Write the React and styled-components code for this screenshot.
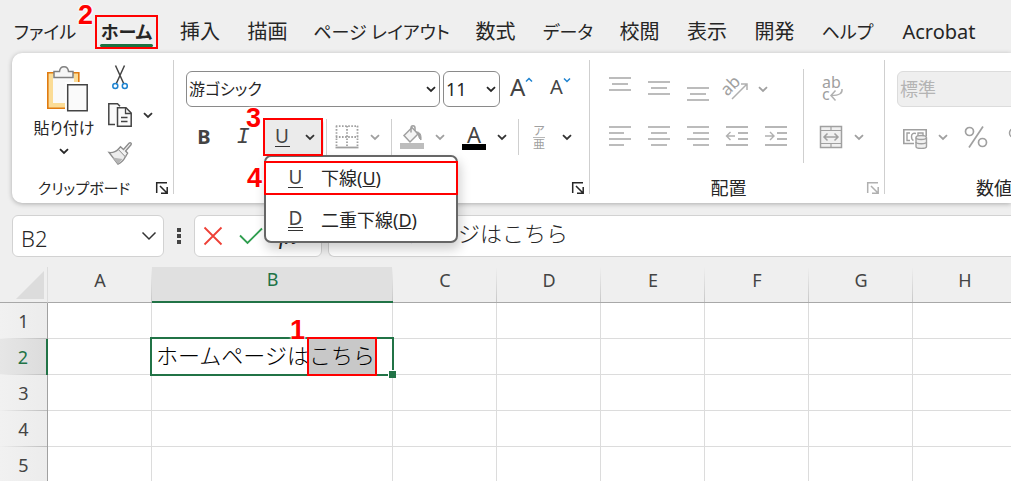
import React from 'react';
import styled, { createGlobalStyle, css } from 'styled-components';

const GlobalStyle = createGlobalStyle`
  * {
    box-sizing: border-box;
  }
  body {
    margin: 0;
    background: #efefef;
    color: #262626;
    font-family: 'Noto Sans', 'Noto Sans CJK JP', sans-serif;
    font-size: 18px;
    font-feature-settings: 'palt';
  }
  button,
  input,
  select {
    margin: 0;
    padding: 0;
    border: 0;
    background: none;
    color: inherit;
    font: inherit;
    font-feature-settings: inherit;
  }
  svg {
    display: block;
    flex: none;
    fill: none;
    overflow: visible;
  }
`;

const Page = styled.div`
  overflow-x: clip;
`;

/* numbered step markers */

const Callout = styled.span`
  position: absolute;
  inset: ${({ $inset }) => $inset || '-2px'};
  border: 2px solid #f00;
  pointer-events: none;
  z-index: 3;
`;

const stepPlace = {
  top: '-13px',
  middle: '4px',
  above: '-20px',
};

const StepNumber = styled.b`
  position: absolute;
  right: 100%;
  top: ${({ $place }) => stepPlace[$place]};
  padding-right: 4px;
  color: #f00;
  font: bold 27px/22px 'Liberation Sans', sans-serif;
  text-shadow: 0 0 2px #fff, 0 0 2px #fff, 0 0 3px #fff, 0 0 3px #fff;
`;

const Step = ({ number, place = 'top', inset }) => (
  <Callout $inset={inset}>
    <StepNumber $place={place}>{number}</StepNumber>
  </Callout>
);

/* tabs */

const TabBar = styled.nav`
  display: flex;
  align-items: flex-end;
  gap: 28px;
  height: 53px;
  padding: 0 16px 4px 18px;
`;

const Tab = styled.button`
  position: relative;
  display: flex;
  flex: none;
  justify-content: center;
  width: ${({ $width }) => $width}px;
  height: 34px;
  font-size: ${({ $kana }) => ($kana ? 18 : 20)}px;
  line-height: 34px;
  white-space: nowrap;
  ${({ $active }) =>
    $active &&
    css`
      font-weight: bold;
      &::after {
        content: '';
        position: absolute;
        inset: auto 0 2px;
        height: 3px;
        border-radius: 2px;
        background: #1b7242;
      }
    `}
`;

const tabs = [
  { label: 'ファイル', width: 54, kana: true },
  { label: 'ホーム', width: 53, kana: true, active: true },
  { label: '挿入', width: 38 },
  { label: '描画', width: 41 },
  { label: 'ページ レイアウト', width: 131, kana: true },
  { label: '数式', width: 41 },
  { label: 'データ', width: 48, kana: true },
  { label: '校閲', width: 39 },
  { label: '表示', width: 40 },
  { label: '開発', width: 39 },
  { label: 'ヘルプ', width: 51, kana: true },
  { label: 'Acrobat', width: 76 },
];

/* ribbon */

const Ribbon = styled.section`
  display: flex;
  height: 150px;
  margin-left: 12px;
  border-radius: 10px 0 0 10px;
  background: #fff;
  box-shadow: 0 1px 5px rgba(0, 0, 0, 0.28);
`;

const Group = styled.div`
  display: flex;
  flex: none;
  flex-direction: column;
  width: ${({ $width }) => $width}px;
`;

const GroupBody = styled.div`
  display: flex;
  height: 120px;
  padding-left: ${({ $left }) => $left}px;
`;

const GroupFooter = styled.div`
  display: flex;
  align-items: center;
  height: 30px;
  padding-right: 5px;
  font-size: ${({ $kana }) => ($kana ? 15 : 18)}px;
  line-height: 24px;
  span {
    flex: 1;
    text-align: center;
  }
`;

const Divider = styled.i`
  flex: none;
  width: 1px;
  height: ${({ $height }) => $height}px;
  margin-top: ${({ $top }) => $top || 0}px;
  background: #cfcfcf;
`;

const Stack = styled.div`
  display: flex;
  flex-direction: column;
  gap: 12px;
  padding: 18px ${({ $right }) => $right || 0}px 0 ${({ $left }) => $left || 0}px;
`;

const Row = styled.div`
  display: flex;
  align-items: center;
  gap: ${({ $gap }) => $gap || 0}px;
  height: 36px;
`;

const ToolButton = styled.button`
  display: flex;
  align-items: center;
  justify-content: center;
  width: ${({ $width }) => $width || 38}px;
  height: 36px;
  color: ${({ disabled }) => (disabled ? '#a0a0a0' : '#444')};
`;

const BoldButton = styled(ToolButton)`
  padding-bottom: 2px;
  font-size: 20px;
  font-weight: bold;
`;

const ItalicButton = styled(ToolButton)`
  font: italic 22px 'Liberation Mono', monospace;
`;

const SplitButton = styled.button`
  display: flex;
  align-items: center;
  gap: 10px;
  width: 60px;
  height: 36px;
  padding-left: 6px;
  border-radius: 5px;
  color: ${({ disabled }) => (disabled ? '#a0a0a0' : '#333')};
  ${({ $pressed }) => $pressed && 'background: #ebebeb;'}
`;

const PasteButton = styled.button`
  display: flex;
  flex-direction: column;
  align-items: center;
  width: 76px;
  padding-top: 12px;
  font-size: 16px;
  line-height: 22px;
  svg + span {
    margin: 4px 0 6px;
  }
`;

const ClipboardTools = styled.div`
  display: flex;
  flex-direction: column;
  gap: 2px;
  padding-top: 6px;
`;

const LetterIcon = styled.span`
  display: flex;
  flex: none;
  flex-direction: column;
  align-items: center;
  width: 24px;
  color: #444;
  font-size: 22px;
  line-height: 19px;
`;

const UnderlinedLetter = styled.span`
  width: 15px;
  padding-bottom: ${({ $double }) => ($double ? 0 : 1)}px;
  border-bottom: ${({ $double }) => ($double ? '4px double' : '1px solid')} #333;
  color: #444;
  font-size: 19px;
  line-height: 18px;
  text-align: center;
`;

const ColorBar = styled.i`
  width: 24px;
  height: 6px;
  background: #000;
`;

const Ruby = styled(LetterIcon)`
  color: #a0a0a0;
  font-size: 12px;
  line-height: 13px;
  span + span {
    border-top: 1px solid #b8b8b8;
  }
`;

const GrowTools = styled(Row)`
  padding-left: 7px;
`;

const GrowLetter = styled.button`
  display: flex;
  align-items: flex-start;
  width: 40px;
  height: 32px;
  color: #444;
  font-size: ${({ $size }) => $size}px;
  line-height: 28px;
  svg {
    margin-top: 3px;
  }
`;

const Picker = styled.label`
  display: grid;
  align-items: center;
  width: ${({ $width }) => $width}px;
  height: 36px;
  border: 1px solid ${({ $disabled }) => ($disabled ? '#dcdcdc' : '#8a8a8a')};
  border-radius: 6px;
  background: ${({ $disabled }) => ($disabled ? '#efefef' : '#fff')};
  color: ${({ $disabled }) => ($disabled ? '#b4b4b4' : '#262626')};
  select,
  svg {
    grid-area: 1 / 1;
  }
  select {
    appearance: none;
    width: 100%;
    height: 34px;
    padding-left: 2px;
    color: inherit;
    font-size: ${({ $kana }) => ($kana ? 16 : 18)}px;
    opacity: 1;
  }
  svg {
    justify-self: end;
    margin-right: 2px;
    pointer-events: none;
  }
`;

/* underline menu */

const Anchor = styled.div`
  position: relative;
`;

const Menu = styled.ul`
  position: absolute;
  top: 36px;
  left: 0;
  z-index: 2;
  width: 194px;
  margin: 0;
  padding: 4px 0 0;
  border: 2px solid #666;
  border-radius: 7px;
  background: #fff;
  box-shadow: 2px 6px 12px rgba(0, 0, 0, 0.2);
  list-style: none;
`;

const MenuItem = styled.li`
  position: relative;
  button {
    display: flex;
    align-items: center;
    gap: 18px;
    width: 100%;
    height: ${({ $height }) => $height}px;
    padding: ${({ $top }) => $top || 0}px 0 0 22px;
    font-size: 18px;
    line-height: 24px;
    text-align: left;
  }
`;

/* formula bar */

const FormulaRow = styled.div`
  display: flex;
  height: 42px;
  margin: 12px 0 10px 12px;
`;

const Box = styled.div`
  display: flex;
  flex: none;
  align-items: center;
  border: 1px solid #d2d2d2;
  border-radius: 6px;
  background: #fff;
`;

const NameBox = styled(Box)`
  width: 152px;
  padding: 0 6px 0 8px;
  input {
    flex: 1;
    min-width: 0;
    padding-top: 4px;
    font-size: 22px;
    font-weight: 300;
  }
`;

const MoreButton = styled.button`
  display: flex;
  align-items: center;
  justify-content: center;
  width: 30px;
`;

const EntryBox = styled(Box)`
  justify-content: space-between;
  width: 128px;
  margin-right: 6px;
  padding: 0 25px 0 8px;
`;

const FunctionButton = styled.button`
  font: italic 24px 'Liberation Serif', serif;
`;

const FormulaBox = styled(Box)`
  flex: 1;
  border-right: 0;
  border-radius: 6px 0 0 6px;
  input {
    width: 100%;
    padding: 0 0 8px 20px;
    font-size: 22px;
    font-weight: 300;
    font-feature-settings: normal;
  }
`;

/* sheet */

const Sheet = styled.table`
  width: 100%;
  border-spacing: 0;
  table-layout: fixed;
  background: #fff;
  th,
  td {
    height: 36px;
    padding: 0;
  }
  td {
    border-right: 1px solid #dcdcdc;
    border-bottom: 1px solid #dcdcdc;
  }
`;

const Corner = styled.th`
  border-right: 1px solid #ddd;
  border-bottom: 1px solid #a8a8a8;
  background: #efefef;
  svg {
    margin-left: 16px;
  }
`;

const ColumnHead = styled.th`
  border-bottom: ${({ $active }) => ($active ? '2px solid #217346' : '1px solid #a8a8a8')};
  background: linear-gradient(#efefef, #c8c8c8) right / 1px 100% no-repeat,
    ${({ $active }) => ($active ? '#e0e0e0' : '#efefef')};
  color: ${({ $active }) => ($active ? '#217346' : '#444')};
  font-weight: normal;
  line-height: 24px;
  && {
    padding-bottom: 10px;
  }
`;

const RowHead = styled.th`
  border-right: ${({ $active }) => ($active ? '2px solid #217346' : '1px solid #a0a0a0')};
  background: linear-gradient(to right, #efefef, #bdbdbd) bottom / 100% 1px no-repeat,
    ${({ $active }) =>
      $active ? 'linear-gradient(to right, #e6e6e6, #dcdcdc)' : 'linear-gradient(to right, #f1f1f1, #ececec)'};
  color: ${({ $active }) => ($active ? '#217346' : '#444')};
  font-weight: normal;
  line-height: 24px;
`;

const EditCell = styled.td`
  position: relative;
  font-size: 22px;
  font-weight: 300;
  font-feature-settings: normal;
  color: #000;
  white-space: nowrap;
  &::before {
    content: '';
    position: absolute;
    inset: -2px;
    border: 2px solid #217346;
  }
  &::after {
    content: '';
    position: absolute;
    right: -4px;
    bottom: -4px;
    width: 7px;
    height: 7px;
    border: solid #fff;
    border-width: 1px 0 0 1px;
    background: #217346;
  }
  > span {
    display: flex;
    height: 35px;
    padding-left: 4px;
    line-height: 32px;
  }
`;

const Selected = styled.mark`
  position: relative;
  background: #c8c8c8;
  color: inherit;
`;

/* icons */

const Svg = ({ size = 24, width, height, children, ...props }) => (
  <svg
    width={width || size}
    height={height || size}
    viewBox={`0 0 ${width || size} ${height || size}`}
    stroke="currentColor"
    strokeWidth="1.5"
    aria-hidden="true"
    {...props}
  >
    {children}
  </svg>
);

const Chevron = () => (
  <Svg size={12} strokeWidth="1.8">
    <path d="M2 4.2 6 8l4-3.800" />
  </Svg>
);

const Lines = ({ rows }) => (
  <Svg strokeWidth="1.4">
    {rows.map(([x1, x2, y]) => (
      <path key={y} d={`M${x1} ${y}H${x2}`} />
    ))}
  </Svg>
);

const PasteIcon = () => (
  <Svg width={48} height={48}>
    <g transform="translate(6 0)">
      <path d="M1.8 7.8h31v35.400h-31z" fill="#fbdc96" stroke="#e07b10" strokeWidth="1.600" />
      <path d="M7 11h21v27H7z" fill="#fafafa" stroke="none" />
      <path d="M19 17h15v30H19z" fill="#fff" stroke="none" />
      <path d="M8 12.500V6.500h5.500c.5-6.500 8.500-6.500 9 0H27v6z" fill="#f6f6f6" stroke="#808080" />
      <path d="M21.700 19.800h19.500v26h-19.500z" fill="#fafafa" stroke="#444" />
    </g>
  </Svg>
);

const CutIcon = () => (
  <Svg>
    <path d="m7.500.5 8.400 18.500M16.500.5 8.100 19" stroke="#444" />
    <circle cx="7.300" cy="21" r="2.500" stroke="#1e83d0" />
    <circle cx="16.800" cy="21" r="2.500" stroke="#1e83d0" />
  </Svg>
);

const CopyIcon = () => (
  <Svg stroke="#444">
    <path d="M7 21.500H.8V.8h8.700l2.500 2.500" fill="#fafafa" />
    <path d="M9.500 4.800H18l5.200 5.200v13.200H9.500z" fill="#fafafa" />
    <path d="M17.500 5v5.500h5.500M13 14.500h6.500M13 18.500h6.500" strokeWidth="1.300" />
  </Svg>
);

const BrushIcon = () => (
  <Svg stroke="#8c8c8c" strokeWidth="1.400">
    <path d="M1 11.500c4 .5 7-.8 9.500-3.500l7 7.500c-1.500 3.500-4 6-7.500 7.700z" fill="#ececec" />
    <path d="M4.500 16.500 14.500 18l-4.500 5z" fill="#b5b5b5" stroke="none" />
    <path d="m10.500 8 2-2.200 3 2.700 5.500-6.300c1.400-1.300 3 .2 2 1.600l-5.400 6.200 2 2.200-2 3.300" fill="#f4f4f4" />
  </Svg>
);

const BordersIcon = () => (
  <Svg strokeWidth="1.800">
    <path d="M.8 1.200h22.400M.8 12h22.400M1.500 1v20M12 1v20M22.500 1v20" strokeDasharray="1.600 1.500" />
    <path d="M.5 22.500h23" strokeWidth="1.800" />
  </Svg>
);

const FillIcon = () => (
  <Svg>
    <path d="m4 10.500 8-8 6 6.500-8 8z" fill="#f4f4f4" />
    <path d="M11 7.500V3c0-3 4-3 4 0v3" />
    <path d="M16 7c4-.5 5.500 3 5 8-1.500-1-2.500-3-2.500-5z" fill="#a0a0a0" strokeWidth="1" />
    <path d="M0 18h24v6H0z" fill="#bdbdbd" stroke="none" />
  </Svg>
);

const OrientationIcon = () => (
  <Svg stroke="#b0b0b0">
    <text x="-1" y="17" transform="rotate(-45 5 12)" fill="#a0a0a0" stroke="none" fontSize="17">
      ab
    </text>
    <path d="M9 22 24 7M18 7h6v6" />
  </Svg>
);

const WrapIcon = () => (
  <Svg>
    <g fill="#a0a0a0" stroke="none" fontSize="16">
      <text x="2" y="11">ab</text>
      <text x="2" y="23">c</text>
    </g>
    <path d="M22 12c.5 4-2 6.500-11 6.500M15.500 13.500l-4.500 5 4.500 5" stroke="#b0b0b0" />
  </Svg>
);

const MergeIcon = () => (
  <Svg>
    <path d="M1.500 1.500h21v21h-21z" fill="#f0f0f0" />
    <path d="M1.500 5.500h21M1.500 18.500h21M12 1.500v4M12 18.500v4" strokeWidth="1.200" />
    <path d="M5 12h14M8.500 8.500 5 12l3.500 3.500M15.500 8.500 19 12l-3.500 3.500" />
  </Svg>
);

const CurrencyIcon = () => (
  <Svg strokeWidth="1.400">
    <path d="M11 18.500H.8V4.800h22.400V11" strokeWidth="1.600" />
    <path d="M7 8H4v7.500h3M13 8.500c-3-1-4.500.5-4.500 3s.8 3.500 2 4M15 11V8h5v2" />
    <path d="M13 12.500v9c0 2.500 10.500 2.500 10.500 0v-9" fill="#f0f0f0" />
    <path d="M13 17c0 2.300 10.500 2.300 10.500 0" />
    <ellipse cx="18.200" cy="12.500" rx="5.200" ry="2" fill="#f0f0f0" />
  </Svg>
);

const PercentIcon = () => (
  <Svg strokeWidth="1.700">
    <circle cx="5.500" cy="6.500" r="4" />
    <circle cx="18.500" cy="17.500" r="4" />
    <path d="M19 1.500 5 22.500" />
  </Svg>
);

const CommaIcon = () => (
  <Svg>
    <circle cx="12" cy="8" r="4.500" />
    <path d="M16.500 8c.5 6-2 10-7 12" />
  </Svg>
);

const LauncherIcon = ({ disabled }) => (
  <Svg size={12} stroke={disabled ? '#b0b0b0' : '#262626'} strokeWidth="1.500">
    <path d="M.7 11V.7H11M4 4l7 7M11.200 5v6.200H5" />
  </Svg>
);

const alignTop = [[1, 23, 1], [4, 20, 7], [1, 23, 13]];
const alignMiddle = [[1, 23, 5], [4, 20, 11], [1, 23, 17]];
const alignBottom = [[1, 23, 11], [4, 20, 17], [1, 23, 23]];
const alignLeft = [[1, 23, 2], [1, 16, 8], [1, 23, 14], [1, 16, 20]];
const alignCenter = [[1, 23, 2], [4, 20, 8], [1, 23, 14], [4, 20, 20]];
const alignRight = [[1, 23, 2], [7, 23, 8], [1, 23, 14], [7, 23, 20]];

const IndentIcon = ({ increase }) => (
  <Svg strokeWidth="1.400">
    <path d="M1 2h22M13 8h10M13 14h10M1 20h22" />
    <path d={increase ? 'M1 11h9M6 7l4 4-4 4' : 'M10 11H1.500M5.500 7l-4 4 4 4'} stroke="#b0b0b0" />
  </Svg>
);

const Launcher = ({ label, disabled }) => (
  <button type="button" aria-label={label} disabled={disabled}>
    <LauncherIcon disabled={disabled} />
  </button>
);

const ClipboardGroup = () => (
  <Group $width={161}>
    <GroupBody $left={14}>
      <PasteButton type="button">
        <PasteIcon />
        <span>貼り付け</span>
        <Chevron />
      </PasteButton>
      <ClipboardTools>
        <SplitButton type="button" aria-label="切り取り">
          <CutIcon />
        </SplitButton>
        <SplitButton type="button" aria-label="コピー">
          <CopyIcon />
          <Chevron />
        </SplitButton>
        <SplitButton type="button" aria-label="書式のコピー">
          <BrushIcon />
        </SplitButton>
      </ClipboardTools>
    </GroupBody>
    <GroupFooter $kana>
      <span>クリップボード</span>
      <Launcher label="クリップボードの設定" />
    </GroupFooter>
  </Group>
);

const UnderlineMenu = () => (
  <Menu>
    <MenuItem $height={34}>
      <button type="button">
        <UnderlinedLetter>U</UnderlinedLetter>
        <span>
          下線(<u>U</u>)
        </span>
      </button>
      <Step number={4} place="middle" inset="0 -2px" />
    </MenuItem>
    <MenuItem $height={46} $top={4}>
      <button type="button">
        <UnderlinedLetter $double>D</UnderlinedLetter>
        <span>
          二重下線(<u>D</u>)
        </span>
      </button>
    </MenuItem>
  </Menu>
);

const FontGroup = () => (
  <Group $width={415} role="group" aria-label="フォント">
    <GroupBody $left={12}>
      <Stack>
        <Row $gap={3}>
          <Picker $width={254} $kana>
            <select aria-label="フォント名">
              <option>游ゴシック</option>
            </select>
            <Chevron />
          </Picker>
          <Picker $width={57}>
            <select aria-label="フォント サイズ">
              <option>11</option>
            </select>
            <Chevron />
          </Picker>
          <GrowTools>
            <GrowLetter type="button" $size={24} aria-label="フォント サイズの拡大">
              A
              <Svg size={8} stroke="#1e83d0">
                <path d="M1 5.500 4 2.500l3 3" />
              </Svg>
            </GrowLetter>
            <GrowLetter type="button" $size={20} aria-label="フォント サイズの縮小">
              A
              <Svg size={8} stroke="#1e83d0">
                <path d="m1 2.500 3 3 3-3" />
              </Svg>
            </GrowLetter>
          </GrowTools>
        </Row>
        <Row $gap={2}>
          <BoldButton type="button" $width={36}>B</BoldButton>
          <ItalicButton type="button">I</ItalicButton>
          <Anchor>
            <SplitButton type="button" $pressed aria-label="下線">
              <LetterIcon>
                <UnderlinedLetter>U</UnderlinedLetter>
              </LetterIcon>
              <Chevron />
            </SplitButton>
            <Step number={3} inset="-1px 1px -1px -1px" />
            <UnderlineMenu />
          </Anchor>
          <Divider $height={36} />
          <SplitButton type="button" disabled aria-label="罫線">
            <BordersIcon />
            <Chevron />
          </SplitButton>
          <Divider $height={36} />
          <SplitButton type="button" disabled aria-label="塗りつぶしの色">
            <FillIcon />
            <Chevron />
          </SplitButton>
          <SplitButton type="button" aria-label="フォントの色">
            <LetterIcon>
              A
              <ColorBar />
            </LetterIcon>
            <Chevron />
          </SplitButton>
          <Divider $height={36} />
          <SplitButton type="button" aria-label="ふりがな">
            <Ruby>
              <span>ア</span>
              <span>亜</span>
            </Ruby>
            <Chevron />
          </SplitButton>
        </Row>
      </Stack>
    </GroupBody>
    <GroupFooter>
      <span />
      <Launcher label="フォントの設定" />
    </GroupFooter>
  </Group>
);

const AlignGroup = () => (
  <Group $width={294}>
    <GroupBody $left={10}>
      <Stack $right={8}>
        <Row>
          <ToolButton $width={39} disabled aria-label="上揃え"><Lines rows={alignTop} /></ToolButton>
          <ToolButton $width={39} disabled aria-label="上下中央揃え"><Lines rows={alignMiddle} /></ToolButton>
          <ToolButton $width={39} disabled aria-label="下揃え"><Lines rows={alignBottom} /></ToolButton>
          <SplitButton disabled aria-label="方向">
            <OrientationIcon />
            <Chevron />
          </SplitButton>
        </Row>
        <Row>
          <ToolButton $width={39} disabled aria-label="左揃え"><Lines rows={alignLeft} /></ToolButton>
          <ToolButton $width={39} disabled aria-label="中央揃え"><Lines rows={alignCenter} /></ToolButton>
          <ToolButton $width={39} disabled aria-label="右揃え"><Lines rows={alignRight} /></ToolButton>
          <ToolButton $width={39} disabled aria-label="インデントを減らす"><IndentIcon /></ToolButton>
          <ToolButton $width={39} disabled aria-label="インデントを増やす"><IndentIcon increase /></ToolButton>
        </Row>
      </Stack>
      <Divider $height={94} $top={16} />
      <Stack $left={9}>
        <Row>
          <ToolButton disabled aria-label="折り返して全体を表示する"><WrapIcon /></ToolButton>
        </Row>
        <Row>
          <SplitButton disabled aria-label="セルを結合して中央揃え">
            <MergeIcon />
            <Chevron />
          </SplitButton>
        </Row>
      </Stack>
    </GroupBody>
    <GroupFooter>
      <span>配置</span>
      <Launcher label="配置の設定" disabled />
    </GroupFooter>
  </Group>
);

const NumberGroup = () => (
  <Group $width={235}>
    <GroupBody $left={12}>
      <Stack>
        <Row>
          <Picker $width={210} $disabled>
            <select aria-label="表示形式" disabled>
              <option>標準</option>
            </select>
            <Chevron />
          </Picker>
        </Row>
        <Row>
          <SplitButton disabled aria-label="通貨表示形式">
            <CurrencyIcon />
            <Chevron />
          </SplitButton>
          <ToolButton disabled aria-label="パーセント スタイル"><PercentIcon /></ToolButton>
          <ToolButton disabled aria-label="桁区切りスタイル"><CommaIcon /></ToolButton>
        </Row>
      </Stack>
    </GroupBody>
    <GroupFooter>
      <span>数値</span>
      <Launcher label="数値の設定" disabled />
    </GroupFooter>
  </Group>
);

const FormulaBar = () => (
  <FormulaRow>
    <NameBox>
      <input aria-label="名前ボックス" defaultValue="B2" />
      <button type="button" aria-label="名前の一覧">
        <Svg size={16} stroke="#333">
          <path d="m1.500 4.500 6.500 6.500 6.500-6.500" />
        </Svg>
      </button>
    </NameBox>
    <MoreButton type="button" aria-label="その他">
      <Svg width={4} height={18} stroke="none">
        <path d="M0 1h4v4H0zM0 7h4v4H0zM0 13h4v4H0z" fill="#444" />
      </Svg>
    </MoreButton>
    <EntryBox>
      <button type="button" aria-label="キャンセル">
        <Svg size={20} stroke="#ee4036" strokeWidth="1.800">
          <path d="m1.500 1.500 17 17M18.500 1.500l-17 17" />
        </Svg>
      </button>
      <button type="button" aria-label="入力">
        <Svg size={24} stroke="#2f9e4f" strokeWidth="1.800">
          <path d="m1 11.500 7.500 7.500L23 4.500" />
        </Svg>
      </button>
      <FunctionButton type="button" aria-label="関数の挿入">fx</FunctionButton>
    </EntryBox>
    <FormulaBox>
      <input aria-label="数式バー" defaultValue="ホームページはこちら" />
    </FormulaBox>
  </FormulaRow>
);

const columns = ['A', 'B', 'C', 'D', 'E', 'F', 'G', 'H'];
const rows = [1, 2, 3, 4, 5];

const Worksheet = () => (
  <Sheet>
    <colgroup>
      <col width="48" />
      {columns.map((c) => (
        <col key={c} width={c === 'B' ? 241 : 104} />
      ))}
      <col />
    </colgroup>
    <thead>
      <tr>
        <Corner>
          <Svg size={28} stroke="none">
            <path d="M28 0v28H0z" fill="#dcdcdc" />
          </Svg>
        </Corner>
        {columns.map((c) => (
          <ColumnHead key={c} scope="col" $active={c === 'B'}>
            {c}
          </ColumnHead>
        ))}
        <ColumnHead />
      </tr>
    </thead>
    <tbody>
      {rows.map((r) => (
        <tr key={r}>
          <RowHead scope="row" $active={r === 2}>
            {r}
          </RowHead>
          {columns.map((c) =>
            c === 'B' && r === 2 ? (
              <EditCell key={c}>
                <span>
                  ホームページは
                  <Selected>
                    こちら
                    <Step number={1} place="above" />
                  </Selected>
                </span>
              </EditCell>
            ) : (
              <td key={c} />
            )
          )}
          <td />
        </tr>
      ))}
    </tbody>
  </Sheet>
);

const App = () => (
  <Page lang="ja">
    <GlobalStyle />
    <TabBar>
      {tabs.map((t) => (
        <Tab key={t.label} type="button" $width={t.width} $kana={t.kana} $active={t.active}>
          {t.label}
          {t.active && <Step number={2} inset="0 -5px" />}
        </Tab>
      ))}
    </TabBar>
    <Ribbon>
      <ClipboardGroup />
      <Divider $height={134} $top={7} />
      <FontGroup />
      <Divider $height={134} $top={7} />
      <AlignGroup />
      <Divider $height={134} $top={7} />
      <NumberGroup />
    </Ribbon>
    <FormulaBar />
    <Worksheet />
  </Page>
);

export default App;
